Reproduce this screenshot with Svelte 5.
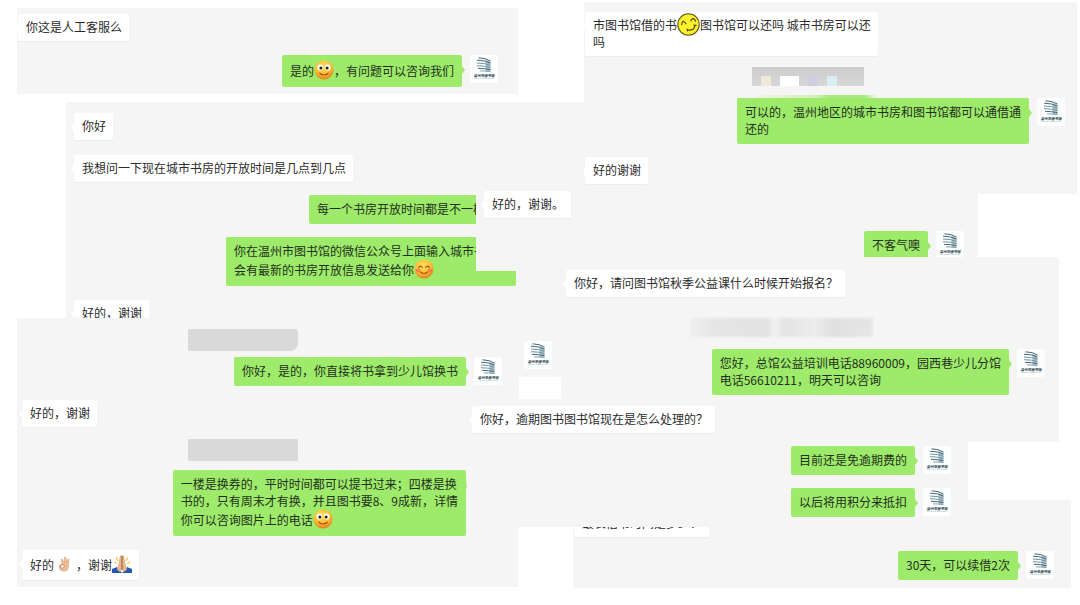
<script>
  // Each part is plain text or { icon } for an inline emoji.
  const smile = { icon: 'smile' };

  const clips = [
    {
      id: 'agent', x: 17, y: 8, w: 501, h: 86,
      rows: [
        { gap: 6, inset: 1, lines: [['你这是人工客服么']] },
        { out: true, avatar: true, gap: 14, inset: 20, lines: [['是的', smile, '，有问题可以咨询我们']] }
      ]
    },
    {
      id: 'hours', x: 66, y: 102, w: 518, h: 310,
      rows: [
        { gap: 11, inset: 8, lines: [['你好']] },
        { gap: 15, inset: 8, lines: [['我想问一下现在城市书房的开放时间是几点到几点']] },
        { out: true, avatar: true, gap: 13, inset: 32, width: 207, lines: [['每一个书房开放时间都是不一样']] },
        {
          out: true, avatar: true, gap: 13, inset: 32, width: 290,
          lines: [['你在温州市图书馆的微信公众号上面输入城市书'], ['会有最新的书房开放信息发送给你', { icon: 'blush' }]]
        },
        { gap: 14, inset: 8, lines: [['好的，谢谢']] },
        { out: true, avatar: true, gap: 14, inset: 32 },
        { block: 'patch', gap: 8, inset: 453 }
      ]
    },
    {
      id: 'returns', x: 584, y: 2, w: 493, h: 192,
      rows: [
        { gap: 10, inset: 1, lines: [['市图书馆借的书', { icon: 'wink' }, '图书馆可以还吗 城市书房可以还'], ['吗']] },
        { block: 'mosaic', gap: 11, inset: 168 },
        { block: 'sliver', gap: 9, inset: 171 },
        { out: true, avatar: true, gap: 0, inset: 12, lines: [['可以的，温州地区的城市书房和图书馆都可以通借通'], ['还的']] },
        { gap: 13, inset: 1, lines: [['好的谢谢']] }
      ]
    },
    {
      id: 'thanks', x: 476, y: 186, w: 502, h: 85,
      rows: [
        { gap: 5, inset: 8, lines: [['好的，谢谢。']] },
        { out: true, avatar: true, gap: 13, inset: 14, lines: [['不客气噢']] }
      ]
    },
    {
      id: 'course', x: 561, y: 257, w: 498, h: 185,
      rows: [
        { gap: 13, inset: 5, lines: [['你好，请问图书馆秋季公益课什么时候开始报名？']] },
        { block: 'haze', gap: 21, inset: 129 },
        { out: true, avatar: true, gap: 12, inset: 14, lines: [['您好，总馆公益培训电话88960009，园西巷少儿分馆'], ['电话56610211，明天可以咨询']] }
      ]
    },
    {
      id: 'exchange', x: 17, y: 318, w: 501, h: 269,
      rows: [
        { block: 'stamp notched', gap: 11, inset: 171 },
        { out: true, avatar: true, gap: 6, inset: 16, lines: [['你好，是的，你直接将书拿到少儿馆换书']] },
        { gap: 14, inset: 5, lines: [['好的，谢谢']] },
        { block: 'stamp', gap: 12, inset: 171 },
        {
          out: true, gap: 9, inset: 52,
          lines: [['一楼是换券的，平时时间都可以提书过来；四楼是换'], ['书的，只有周末才有换，并且图书要8、9成新，详情'], ['你可以咨询图片上的电话', smile]]
        },
        { gap: 14, inset: 5, lines: [['好的', { icon: 'ok' }, '，谢谢', { icon: 'pray' }]] }
      ]
    },
    {
      id: 'renewal', x: 573, y: 500, w: 498, h: 88,
      rows: [
        { gap: 10, inset: 1, lines: [['最长借书时间是多少？']] },
        { out: true, avatar: true, gap: 14, inset: 17, lines: [['30天，可以续借2次']] }
      ]
    },
    {
      id: 'overdue', x: 467, y: 400, w: 501, h: 127,
      rows: [
        { gap: 6, inset: 5, lines: [['你好，逾期图书图书馆现在是怎么处理的？']] },
        { out: true, avatar: true, gap: 13, inset: 17, lines: [['目前还是免逾期费的']] },
        { out: true, avatar: true, gap: 13, inset: 17, lines: [['以后将用积分来抵扣']] }
      ]
    }
  ];
</script>

{#snippet avatar()}
  <svg class="avatar" viewBox="0 0 28 28" aria-hidden="true">
    <rect width="28" height="28" rx="2" fill="#fdfefe" />
    <path d="M15.5 5 20.5 6.5v10h-5z" fill="#456f82" opacity=".4" />
    <g fill="none" stroke="#31566a" stroke-width=".9">
      <path d="M8.5 2.8q7 .2 12 3.2" />
      <path d="M7 5.2q8 0 13.500 3" />
      <path d="M7 8q8 0 13.500 2.400" stroke="#5c8795" />
      <path d="M7 10.700q8 0 13.500 1.900" stroke="#5c8795" />
      <path d="M8 13.300q7 .1 12.500 1.400" />
      <path d="M10 15.900q5-.2 10.500.7" stroke="#6f98a5" />
    </g>
    <text x="14" y="21.500" text-anchor="middle" font-size="3.500" font-weight="700" font-style="italic" fill="#1f3d4c">温州市图书馆</text>
    <path d="M4 23.500h20" stroke="#8fb3c0" stroke-width=".5" stroke-dasharray="1.500 .5" />
  </svg>
{/snippet}

{#snippet emoji(name)}
  <svg class="emoji {name}" viewBox="0 0 20 20" aria-hidden="true">
    {#if name === 'smile'}
      <circle cx="10" cy="10" r="9.500" fill="url(#face)" />
      <ellipse cx="6.300" cy="7.600" rx="2.800" ry="3" fill="#fff" />
      <ellipse cx="13.700" cy="7.600" rx="2.800" ry="3" fill="#fff" />
      <circle cx="6.900" cy="8" r="1.500" fill="#2d1a0b" />
      <circle cx="13.100" cy="8" r="1.500" fill="#2d1a0b" />
      <path d="M5.800 13.200q4.200 3.600 8.400 0" fill="none" stroke="#a04a10" stroke-width="1.200" stroke-linecap="round" />
    {:else if name === 'blush'}
      <circle cx="10" cy="10" r="9.500" fill="url(#face)" />
      <ellipse cx="4.200" cy="11.500" rx="2.500" ry="1.900" fill="#f4694c" opacity=".7" />
      <ellipse cx="15.800" cy="11.500" rx="2.500" ry="1.900" fill="#f4694c" opacity=".7" />
      <path d="M4.500 8.500q2-2.800 4 0M11.500 8.500q2-2.800 4 0M6.500 13q3.500 3 7 0" fill="none" stroke="#a04f12" stroke-width="1.100" stroke-linecap="round" />
    {:else if name === 'wink'}
      <circle cx="10" cy="10" r="9.300" fill="#fff12b" stroke="#5d5419" stroke-width=".9" />
      <path d="M4 10.200q.6-3.200 1.600-2.800t2.200 1.800M12 6.800q1.800-2.600 2.600-1.800t1.600 2M9 14.800q6.200.8 6.800-4.200M14.500 10.400l2.200.5M8.800 14l.3 1.600" fill="none" stroke="#4f4617" stroke-width="1" stroke-linecap="round" />
    {:else if name === 'ok'}
      <path d="M7.500 9.500 6.200 5q.2-1.500 1.600-1L10.300 8l.2-6q1-1.500 2 0l.4 6.200L14.600 4q1.200-.8 1.500.6l-.7 10q-1 4.400-5.400 4.400-5 0-6.200-4.200-.2-4 3.700-5.300Z" fill="#efbd94" stroke="#c48c66" stroke-width=".5" />
      <circle cx="8" cy="13" r="2.200" fill="#fff" stroke="#b0744c" stroke-width=".9" />
    {:else}
      <path d="m4 3 2 4M2 8l3 1.500M16 3l-2 4M18 8l-3 1.500" stroke="#f6c640" stroke-width="1.200" />
      <path d="M0 19v-4l5-2L10 19ZM20 19v-4l-5-2L10 19Z" fill="#2459ae" />
      <path d="M9.800 1.500q-1.600-.8-1.900 1L6.300 10.500 5 15.500 8 18l2-2.500 2 2.500 3-2.500-1.300-5-1.600-8q-.3-1.800-1.900-1Z" fill="#e9b58c" />
      <path d="M10 2v14" stroke="#8e5a3b" stroke-width="1" />
    {/if}
  </svg>
{/snippet}

<svg class="defs" aria-hidden="true">
  <defs>
    <radialGradient id="face" cx="45%" cy="32%" r="70%">
      <stop offset="0" stop-color="#ffe05e" />
      <stop offset=".6" stop-color="#fdbd35" />
      <stop offset="1" stop-color="#e57a20" />
    </radialGradient>
  </defs>
</svg>

<main class="board">
  {#each clips as clip (clip.id)}
    <section class="clip" style="left:{clip.x}px;top:{clip.y}px;width:{clip.w}px;height:{clip.h}px">
      {#each clip.rows as row}
        <div
          class="row"
          class:out={row.out}
          style="margin-top:{row.gap}px;{row.out ? 'padding-right' : 'padding-left'}:{row.inset}px"
        >
          {#if row.block}
            <div class={row.block}>
              {#if row.block === 'mosaic'}
                <i class="cream"></i><i class="white"></i><i class="lilac"></i><i class="aqua"></i>
              {/if}
            </div>
          {:else}
            {#if row.lines}
              <div class="bubble" class:faint={row.out && !row.avatar} style:width={row.width ? `${row.width}px` : null}>
                {#each row.lines as line}
                  <p>
                    {#each line as part}{#if part.icon}{@render emoji(part.icon)}{:else}<span>{part}</span>{/if}{/each}
                  </p>
                {/each}
              </div>
            {/if}
            {#if row.avatar}{@render avatar()}{/if}
          {/if}
        </div>
      {/each}
    </section>
  {/each}
</main>

<style>
  :global(body) {
    margin: 0;
    background: #fff;
  }

  .defs {
    position: absolute;
    width: 0;
    height: 0;
  }

  .board {
    position: relative;
    min-height: 100vh;
    overflow: hidden;
    font-family: "Noto Sans CJK SC", sans-serif;
    font-size: 12px;
    line-height: 17px;
    color: #2b2b2b;
  }

  .clip {
    position: absolute;
    display: flex;
    flex-direction: column;
    overflow: hidden;
    background: #f5f5f5;
  }

  .row {
    display: flex;
    flex: none;
    align-items: flex-start;
    gap: 8px;
  }

  .row.out {
    justify-content: flex-end;
    min-height: 28px;
  }

  .bubble {
    position: relative;
    box-sizing: border-box;
    flex: none;
    padding: 4px 7px 6px 8px;
    border-radius: 2px;
    background: #fff;
    box-shadow: 0 1px 1px #ececec;
    white-space: nowrap;
  }

  .out .bubble {
    padding: 5px 8px 7px;
    background: #9eea6a;
    box-shadow: none;
    color: #22301b;
  }

  .bubble::after {
    content: "";
    position: absolute;
    top: 10px;
    left: -3px;
    border: solid transparent;
    border-width: 4px 3px 4px 0;
    border-right-color: #fff;
  }

  .out .bubble::after {
    top: 11px;
    right: -3px;
    left: auto;
    border-width: 4px 0 4px 3px;
    border-left-color: #9eea6a;
  }

  .out .faint::after {
    border-left-color: #c4efaa;
  }

  p {
    display: flex;
    align-items: center;
    margin: 0;
  }

  span {
    white-space: pre;
  }

  .emoji {
    flex: none;
    width: 20px;
    height: 20px;
  }

  .wink {
    width: 23px;
    height: 23px;
    margin: -3px 0;
  }

  .ok {
    width: 16px;
    margin: 0 4px 0 2px;
  }

  .avatar {
    flex: none;
    width: 28px;
    height: 28px;
  }

  .patch {
    width: 42px;
    height: 22px;
    background: #fff;
  }

  .stamp {
    width: 110px;
    height: 22px;
    border-radius: 1px;
    background: #d9d9d9;
  }

  .notched {
    border-radius: 1px 4px 8px 1px;
  }

  .mosaic {
    display: flex;
    align-items: flex-end;
    box-sizing: border-box;
    width: 112px;
    height: 19px;
    padding-left: 9px;
    gap: 9px;
    background: linear-gradient(#cdcdcd, #d6d6d6);
  }

  .mosaic i {
    width: 10px;
    height: 10px;
  }

  .mosaic .cream {
    background: #eee9d8;
  }

  .mosaic .white {
    width: 19px;
    background: #fff;
  }

  .mosaic .lilac {
    background: #cfcde0;
  }

  .mosaic .aqua {
    background: #d8eef0;
  }

  .sliver {
    width: 122px;
    height: 3px;
    background: linear-gradient(90deg, #f0f4e4, #d2efb8 50%, #a9ea80 60%, #a9ea80 90%, #f5f5f5);
  }

  .haze {
    width: 183px;
    height: 19px;
    background: linear-gradient(90deg, #efefef, #e6e6e6 12%, #e2e2e2 42%, #f1f1f1 46%, #e3e3e3 52%, #ececec 68%, #e0e0e0 78%, #e6e6e6);
    filter: blur(1px);
  }
</style>
